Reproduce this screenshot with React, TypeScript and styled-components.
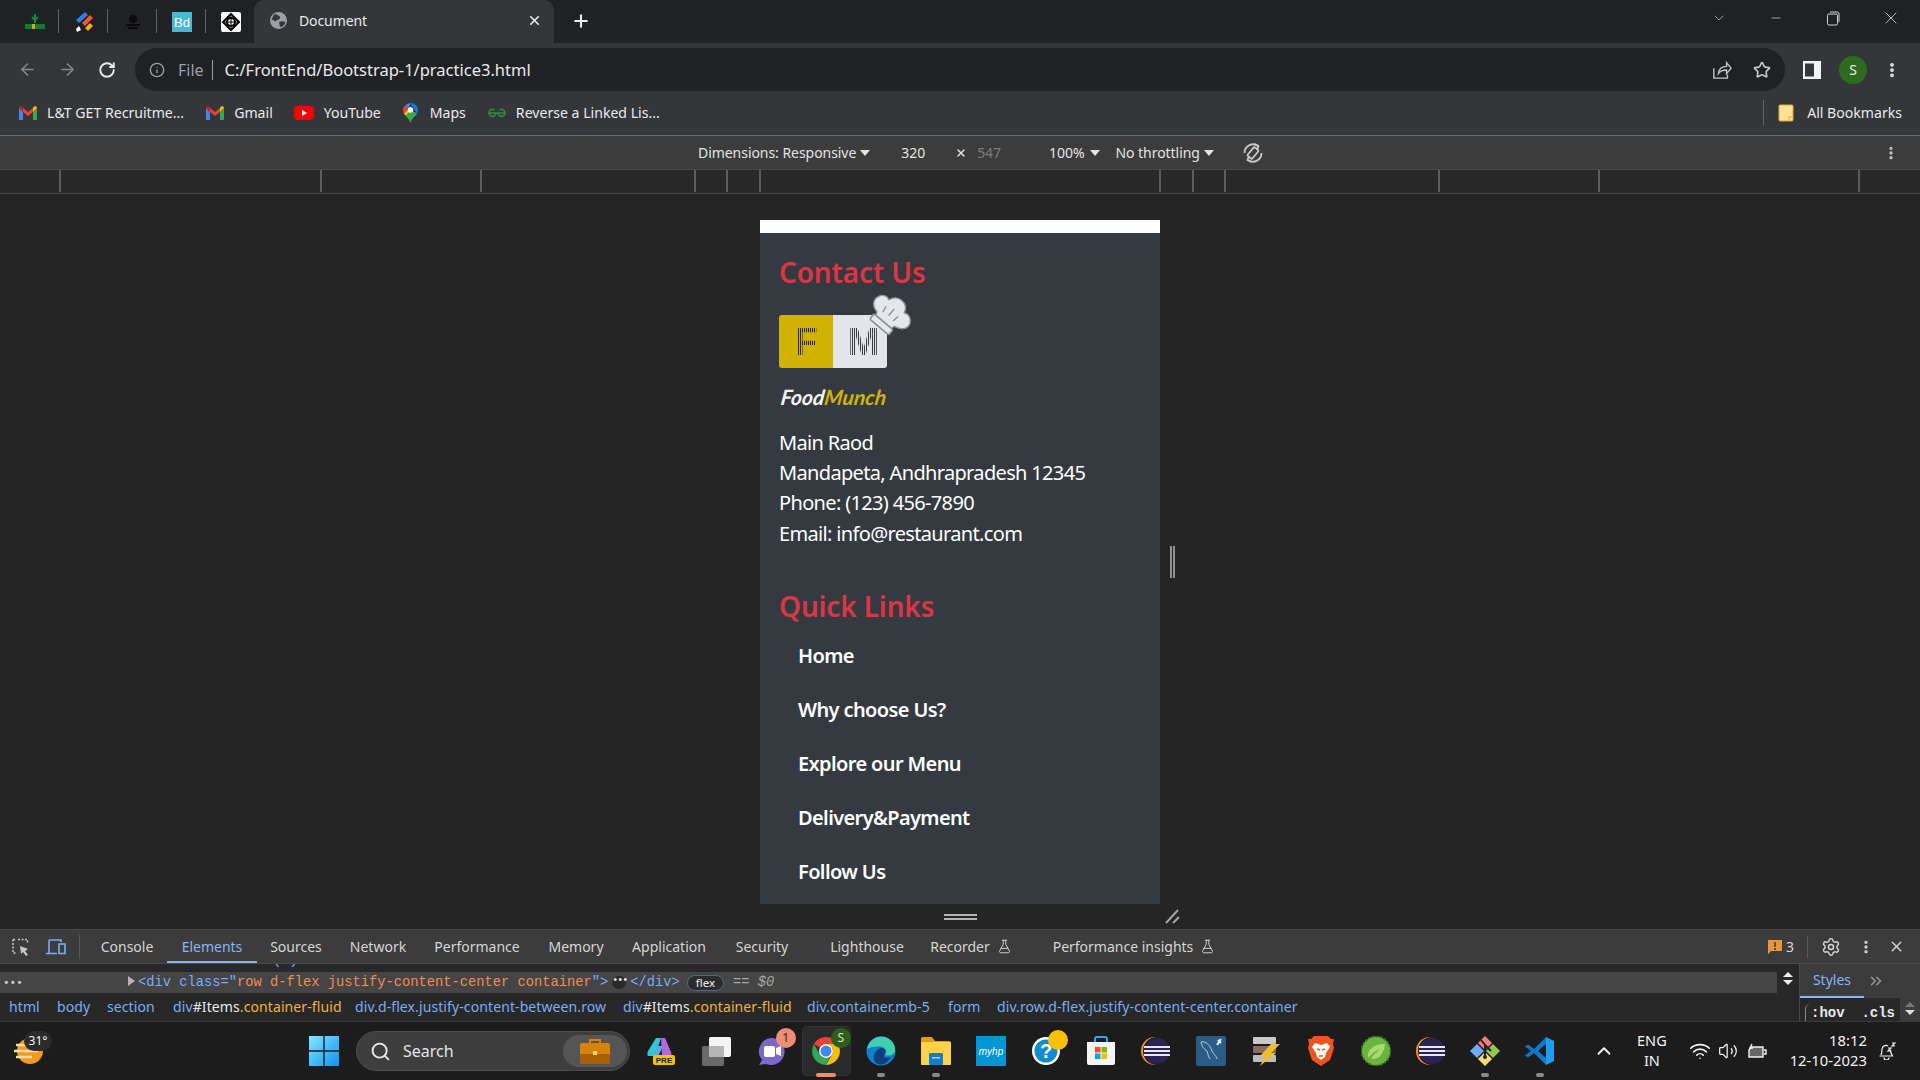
import React from 'react';
import styled, { createGlobalStyle } from 'styled-components';
import {
  ArrowLeft,
  ArrowRight,
  RotateCw,
  Info,
  Star,
  X,
  Plus,
  Minus,
  ChevronDown,
  ChevronUp,
  Settings,
  EllipsisVertical,
  Search,
  Wifi,
  Volume2,
  FlaskConical,
  ChevronsRight,
} from 'lucide-react';

const uiFont = `'Noto Sans', 'Open Sans', sans-serif`;

const GlobalStyle = createGlobalStyle`
  html, body { margin: 0; padding: 0; background: #252525; }
  * { box-sizing: border-box; }
  body { font-family: ${uiFont}; overflow: hidden; }
`;

const Page = styled.div`
  width: 1920px;
  height: 1080px;
  display: flex;
  flex-direction: column;
  overflow: hidden;
  color: #e8eaed;
`;

/* ---------- browser chrome ---------- */
const TabStrip = styled.div`
  height: 43px;
  flex: none;
  display: flex;
  padding-left: 10px;
  background: #202124;
  position: relative;
`;
const PinnedTab = styled.div<{ $sep?: boolean }>`
  width: 49px;
  height: 43px;
  display: flex;
  align-items: center;
  justify-content: center;
  position: relative;
  &::after {
    content: '';
    display: ${(p) => (p.$sep ? 'block' : 'none')};
    position: absolute;
    right: 0;
    top: 9px;
    height: 24px;
    width: 1px;
    background: #5f6368;
  }
`;
const ActiveTab = styled.div`
  width: 300px;
  height: 43px;
  margin-left: -1px;
  background: #35363a;
  border-radius: 10px 10px 0 0;
  display: flex;
  align-items: center;
  padding: 0 0 2px 16px;
  font-size: 14px;
  color: #e8eaed;
  gap: 12px;
`;
const TabTitle = styled.span`
  flex: 1;
  letter-spacing: -0.1px;
`;
const TabClose = styled.span`
  width: 27px;
  display: flex;
  color: #e8eaed;
`;
const NewTab = styled.span`
  margin-left: 17px;
  display: flex;
  align-items: center;
  padding-bottom: 1px;
  color: #e8eaed;
`;
const WindowControls = styled.div`
  margin-left: auto;
  display: flex;
  align-items: center;
  height: 36px;
  color: #d5d5d5;
`;
const WinButton = styled.span<{ $w: number }>`
  width: ${(p) => p.$w}px;
  display: flex;
  justify-content: center;
`;

const AddressRow = styled.div`
  height: 48px;
  flex: none;
  background: #35363a;
  display: flex;
  padding: 5px 0 0 0;
  align-items: flex-start;
`;
const NavButton = styled.span<{ $w: number; $dim?: boolean }>`
  width: ${(p) => p.$w}px;
  height: 43px;
  display: flex;
  align-items: center;
  justify-content: center;
  color: ${(p) => (p.$dim ? '#85878b' : '#e8eaed')};
`;
const Omnibox = styled.div`
  width: 1650px;
  height: 43px;
  border-radius: 22px;
  background: #202124;
  display: flex;
  align-items: center;
  padding-left: 14px;
  margin-left: 5px;
  font-size: 16px;
`;
const FileLabel = styled.span`
  margin-left: 13px;
  color: #9aa0a6;
  padding-right: 8px;
  border-right: 1px solid #9aa0a6;
  line-height: 20px;
`;
const Url = styled.span`
  margin-left: 12px;
  flex: 1;
  font-size: 16.5px;
  color: #e8eaed;
`;
const OmniIcon = styled.span<{ $w: number }>`
  width: ${(p) => p.$w}px;
  display: flex;
  justify-content: center;
  color: #c4c7c5;
`;
const Avatar = styled.span`
  width: 28px;
  height: 28px;
  border-radius: 50%;
  background: #2e6b1f;
  color: #e8eaed;
  font-size: 14px;
  display: flex;
  align-items: center;
  justify-content: center;
`;

const BookmarkBar = styled.div`
  height: 45px;
  flex: none;
  background: #35363a;
  border-bottom: 1px solid #6b6c6f;
  display: flex;
  align-items: center;
  padding: 0 0 1px 19px;
  font-size: 14.1px;
`;
const Bookmark = styled.span<{ $ml: number }>`
  display: flex;
  align-items: center;
  gap: 10px;
  margin-left: ${(p) => p.$ml}px;
  color: #e8eaed;
  white-space: nowrap;
`;
const BookmarkEnd = styled.span`
  margin-left: auto;
  display: flex;
  align-items: center;
  gap: 13px;
  padding: 0 18px 0 14px;
  height: 26px;
  border-left: 1px solid #5f6368;
`;

/* ---------- device toolbar ---------- */
const DeviceBar = styled.div`
  height: 34px;
  flex: none;
  background: #3c3c3c;
  border-bottom: 1px solid #4a4a4a;
  display: flex;
  align-items: center;
  padding-left: 698px;
  font-size: 14px;
  color: #e3e3e3;
`;
const DeviceText = styled.span<{ $ml?: number; $dim?: boolean }>`
  margin-left: ${(p) => p.$ml ?? 0}px;
  color: ${(p) => (p.$dim ? '#7d7d7d' : '#e3e3e3')};
  white-space: nowrap;
  letter-spacing: -0.05px;
`;
const Caret = styled.span`
  width: 0;
  height: 0;
  margin-left: 4px;
  border-left: 5px solid transparent;
  border-right: 5px solid transparent;
  border-top: 6px solid #e3e3e3;
`;
const Ruler = styled.div`
  height: 24px;
  flex: none;
  background: #292929;
  border-bottom: 1px solid #494949;
  display: flex;
`;
const RulerCell = styled.span<{ $w: number }>`
  width: ${(p) => p.$w}px;
  height: 22px;
  border-right: 2px solid #5c5c5c;
  flex: none;
`;

/* ---------- emulated page ---------- */
const Viewport = styled.div`
  height: 735px;
  flex: none;
  background: #252525;
  padding-top: 26px;
  display: flex;
  justify-content: center;
  position: relative;
`;
const Device = styled.div`
  width: 400px;
  height: 684px;
  background: #343a40;
  border-top: 13px solid #fff;
  padding: 22px 19px 0;
  overflow: hidden;
  flex: none;
`;
const SectionTitle = styled.h3`
  margin: 0;
  font-size: 28px;
  line-height: 34px;
  font-weight: 600;
  color: #dc3545;
  letter-spacing: -0.15px;
`;
const Logo = styled.div`
  width: 108px;
  height: 53px;
  margin-top: 26px;
  display: flex;
  position: relative;
`;
const LogoCell = styled.div<{ $bg: string; $radius: string }>`
  flex: 1;
  background: ${(p) => p.$bg};
  border-radius: ${(p) => p.$radius};
  display: flex;
  align-items: center;
  justify-content: center;
`;
const LogoLetter = styled.span<{ $c: string; $ml?: number }>`
  font-family: 'Liberation Sans', sans-serif;
  font-weight: 700;
  font-size: 38px;
  line-height: 1;
  margin-left: ${(p) => p.$ml ?? 0}px;
  background: repeating-linear-gradient(90deg, ${(p) => p.$c} 0 1px, transparent 1px 2px);
  -webkit-background-clip: text;
  background-clip: text;
  color: transparent;
`;
const HatWrap = styled.span`
  position: absolute;
  right: -30px;
  top: -28px;
  display: flex;
`;
const Brand = styled.div`
  margin-top: 13px;
  height: 32px;
  line-height: 32px;
  font-family: 'Lato', sans-serif;
  font-style: italic;
  font-weight: 700;
  font-size: 21px;
  color: #f3f3f3;
  transform: skewX(-8deg);
  transform-origin: left bottom;
`;
const BrandAccent = styled.span`
  color: #d0b200;
`;
const Address = styled.p`
  margin: 15px 0 0;
  font-size: 20px;
  line-height: 30.2px;
  color: #fff;
  letter-spacing: -0.66px;
`;
const LinksTitle = styled(SectionTitle)`
  margin-top: 40px;
`;
const LinkList = styled.ul`
  list-style: none;
  margin: 6px 0 0;
  padding: 0 0 0 19px;
`;
const LinkItem = styled.li`
  height: 54px;
  line-height: 54px;
  font-size: 20px;
  font-weight: 600;
  color: #fff;
  letter-spacing: -0.62px;
`;
const ResizeHandle = styled.span<{ $x: number; $y: number }>`
  position: absolute;
  left: ${(p) => p.$x}px;
  top: ${(p) => p.$y}px;
  display: flex;
`;

/* ---------- devtools ---------- */
const DevTabs = styled.div`
  height: 35px;
  flex: none;
  background: #3c3c3c;
  border-top: 1px solid #4a4a4a;
  border-bottom: 1px solid #4a4a4a;
  display: flex;
  align-items: center;
  font-size: 14px;
  color: #d6d6d6;
  position: relative;
`;
const DevIcon = styled.span<{ $w: number }>`
  width: ${(p) => p.$w}px;
  display: flex;
  justify-content: center;
`;
const DevDivider = styled.span`
  width: 1px;
  height: 24px;
  background: #5a5a5a;
`;
const DevTab = styled.span<{ $w: number; $active?: boolean }>`
  width: ${(p) => p.$w}px;
  height: 33px;
  line-height: 32px;
  flex: none;
  text-align: center;
  white-space: nowrap;
  color: ${(p) => (p.$active ? '#8ab4f8' : '#d6d6d6')};
  box-shadow: ${(p) => (p.$active ? 'inset 0 -2px 0 #8ab4f8' : 'none')};
  display: flex;
  align-items: center;
  justify-content: center;
  gap: 7px;
`;
const ConsoleTab = styled(DevTab)`
  padding-left: 7px;
`;
const DevRight = styled.div`
  margin-left: auto;
  display: flex;
  align-items: center;
  height: 33px;
`;
const IssueCount = styled.span`
  display: flex;
  align-items: center;
  gap: 4px;
  font-size: 14px;
  padding-right: 13px;
  margin-right: 12px;
  border-right: 1px solid #5a5a5a;
  height: 22px;
`;

const Split = styled.div`
  height: 57px;
  flex: none;
  display: flex;
  background: #282828;
`;
const ElementsPane = styled.div`
  flex: 1;
  display: flex;
  flex-direction: column;
  min-width: 0;
`;
const ClippedLine = styled.div`
  height: 8px;
  flex: none;
  overflow: hidden;
  background: #282828;
  padding-left: 141px;
  font-family: 'Liberation Mono', monospace;
  font-size: 13.75px;
  line-height: 8px;
  color: #7cacf8;
  white-space: pre;
`;
const ClippedText = styled.span`
  display: block;
  margin-top: -7px;
`;
const SelectedLine = styled.div`
  height: 21px;
  flex: none;
  background: #454545;
  display: flex;
  align-items: center;
  font-family: 'Liberation Mono', monospace;
  font-size: 13.75px;
  color: #7cacf8;
  white-space: pre;
  position: relative;
`;
const Dots = styled.span`
  width: 128px;
  padding-left: 3px;
  color: #c8c8c8;
  font-weight: 700;
  font-size: 11px;
  letter-spacing: 0;
`;
const MarkerArrow = styled.span`
  width: 0;
  height: 0;
  border-top: 5px solid transparent;
  border-bottom: 5px solid transparent;
  border-left: 7px solid #b5b5b5;
  margin-right: 3px;
  margin-top: -4px;
`;
const AttrValue = styled.span`
  color: #f28b54;
`;
const Ellipsis = styled.span`
  width: 14px;
  height: 13px;
  margin: 0 4px;
  border-radius: 7px;
  background: #2a2a2a;
  color: #eee;
  font-size: 10px;
  line-height: 10px;
  text-align: center;
  letter-spacing: -1px;
`;
const FlexChip = styled.span`
  margin: 0 9px 0 7px;
  width: 37px;
  height: 16px;
  border-radius: 8px;
  border: 1px solid #4e6c83;
  background: #2c2c2c;
  color: #eee;
  font-family: ${uiFont};
  font-size: 11.5px;
  line-height: 14px;
  text-align: center;
`;
const Muted = styled.span`
  color: #a5a5a5;
  font-style: italic;
`;
const Breadcrumbs = styled.div`
  height: 28px;
  flex: none;
  display: flex;
  align-items: center;
  padding: 0 0 2px 9px;
  font-size: 14px;
  color: #7cacf8;
  letter-spacing: 0.1px;
  white-space: nowrap;
`;
const Crumb = styled.span<{ $w: number }>`
  width: ${(p) => p.$w}px;
  flex: none;
`;
const CrumbId = styled.span`
  color: #e8eaed;
`;
const CrumbClass = styled.span`
  color: #f0b33a;
`;
const Stepper = styled.div`
  width: 22px;
  display: flex;
  flex-direction: column;
  align-items: center;
  padding-top: 8px;
  gap: 3px;
  height: 29px;
`;
const StepArrow = styled.span<{ $down?: boolean; $dim?: boolean }>`
  width: 0;
  height: 0;
  border-left: 5px solid transparent;
  border-right: 5px solid transparent;
  ${(p) =>
    p.$down
      ? `border-top: 5px solid ${p.$dim ? '#ddd' : '#eee'};`
      : `border-bottom: 5px solid ${p.$dim ? '#777' : '#eee'};`}
`;
const SidePane = styled.div`
  width: 121px;
  flex: none;
  background: #3c3c3c;
  border-left: 1px solid #4a4a4a;
  display: flex;
  flex-direction: column;
`;
const SideTabs = styled.div`
  height: 34px;
  flex: none;
  display: flex;
  align-items: center;
  font-size: 14px;
  color: #8ab4f8;
`;
const StylesTab = styled.span`
  width: 64px;
  height: 34px;
  line-height: 32px;
  text-align: center;
  box-shadow: inset 0 -2px 0 #8ab4f8;
`;
const HovRow = styled.div`
  flex: 1;
  background: #282828;
  display: flex;
  font-family: 'Liberation Mono', monospace;
  font-weight: 700;
  font-size: 14px;
  color: #e8eaed;
  padding: 0 0 0 5px;
  overflow: hidden;
  line-height: 30px;
  white-space: pre;
  position: relative;
`;
const HovPane = styled.div`
  flex: 1;
  padding-left: 5px;
  border-left: 1px solid #8a8a8a;
  margin-top: 6px;
  line-height: 18px;
  border-top-left-radius: 5px;
`;
const HovStepper = styled.div`
  width: 20px;
  background: #3c3c3c;
  display: flex;
  flex-direction: column;
  align-items: center;
  padding-top: 4px;
  gap: 3px;
`;

/* ---------- taskbar ---------- */
const Taskbar = styled.div`
  height: 61px;
  flex: none;
  background: #1c1c1c;
  border-top: 1px solid #3a3a3a;
  display: flex;
  align-items: center;
  padding-bottom: 2px;
  position: relative;
`;
const Weather = styled.div`
  width: 55px;
  height: 58px;
  flex: none;
  margin-right: 242px;
  position: relative;
  display: flex;
  align-items: center;
  justify-content: center;
`;
const Temp = styled.span`
  position: absolute;
  left: 24px;
  top: 9px;
  width: 28px;
  height: 20px;
  border-radius: 10px;
  background: #2b2b2b;
  font-size: 12px;
  line-height: 20px;
  text-align: center;
  color: #f2f2f2;
`;
const TaskSlot = styled.div<{ $active?: boolean; $run?: boolean }>`
  width: 54.95px;
  height: 58px;
  flex: none;
  display: flex;
  align-items: center;
  justify-content: center;
  position: relative;
  &::before {
    content: '';
    display: ${(p) => (p.$active ? 'block' : 'none')};
    position: absolute;
    left: 3px;
    right: 3px;
    top: 4px;
    bottom: 4px;
    border-radius: 5px;
    background: #2a2a2a;
    border: 1px solid #333;
  }
  &::after {
    content: '';
    display: ${(p) => (p.$run || p.$active ? 'block' : 'none')};
    position: absolute;
    bottom: 3px;
    left: 50%;
    transform: translateX(-50%);
    width: ${(p) => (p.$active ? 20 : 8)}px;
    height: 4px;
    border-radius: 2px;
    background: ${(p) => (p.$active ? '#f28b74' : '#8a8a8a')};
  }
  & > * {
    position: relative;
  }
`;
const SearchPill = styled.div`
  width: 274px;
  height: 40px;
  flex: none;
  margin: 0 4px;
  border-radius: 20px;
  background: #3e3e3e;
  border: 1px solid #4b4b4b;
  display: flex;
  align-items: center;
  padding-left: 13px;
  gap: 12px;
  font-size: 16px;
  color: #e6e6e6;
`;
const SearchBadge = styled.span`
  margin-left: auto;
  margin-right: 2px;
  width: 64px;
  height: 32px;
  border-radius: 16px;
  background: #555;
  display: flex;
  align-items: center;
  justify-content: center;
`;
const Badge = styled.span<{ $bg: string }>`
  position: absolute !important;
  top: 6px;
  right: 3px;
  width: 20px;
  height: 20px;
  border-radius: 50%;
  background: ${(p) => p.$bg};
  color: #2a2a2a;
  font-size: 12px;
  line-height: 20px;
  text-align: center;
`;
const Tray = styled.div`
  margin-left: 21px;
  display: flex;
  align-items: center;
  color: #f2f2f2;
`;
const TrayIcon = styled.span<{ $w: number; $ml?: number }>`
  width: ${(p) => p.$w}px;
  margin-left: ${(p) => p.$ml ?? 0}px;
  display: flex;
  justify-content: center;
`;
const Lang = styled.span`
  width: 46px;
  margin: 0 0 3px 10px;
  font-size: 14.5px;
  line-height: 20px;
  text-align: center;
`;
const Clock = styled.span`
  width: 90px;
  margin: 0 0 3px 8px;
  font-size: 14.8px;
  line-height: 20px;
  text-align: right;
`;

/* ---------- small drawings ---------- */
const GmailIcon = () => (
  <svg width="18" height="14" viewBox="0 0 18 14">
    <path d="M0 2v12h4V6z" fill="#4285f4" />
    <path d="M18 2v12h-4V6z" fill="#34a853" />
    <path d="M4 6v-4l5 4 5-4v4l-5 4z" fill="#ea4335" />
    <path d="M0 2l4 4V1.5L2 0C1 0 0 1 0 2z" fill="#c5221f" />
    <path d="M18 2l-4 4V1.5L16 0c1 0 2 1 2 2z" fill="#fbbc04" />
  </svg>
);
const YouTubeIcon = () => (
  <svg width="20" height="14" viewBox="0 0 20 14">
    <rect width="20" height="14" rx="4" fill="#f00" />
    <path d="M8 4l5 3-5 3z" fill="#fff" />
  </svg>
);
const MapsIcon = () => (
  <svg width="15" height="20" viewBox="0 0 15 20">
    <path d="M7.5 0a7 7 0 0 0-5.5 2.6l3.5 3z" fill="#4285f4" />
    <path d="M7.5 0C11.600 0 15 3 15 7c0 1.200-.3 2.300-.8 3.300L10 5z" fill="#1a73e8" />
    <path d="M2 2.600A7 7 0 0 0 0 7c0 1.200.3 2.300.9 3.400L5.500 5.600z" fill="#ea4335" />
    <path d="M.9 10.400C2.500 13.500 6 15 7.500 20c1.500-5 4.800-6.500 6.700-9.700L7.500 7z" fill="#34a853" />
    <path d="M.9 10.400L7.500 4 9.500 5.500 3 12.500z" fill="#fbbc04" />
    <circle cx="7.500" cy="7" r="2.700" fill="#fff" />
  </svg>
);
const GfgIcon = () => (
  <svg width="18" height="10" viewBox="0 0 18 10" fill="none" stroke="#2f8d46" strokeWidth="1.500">
    <path d="M1 5h16M8 5a3.500 3.500 0 1 1-1.500-3M10 5a3.500 3.500 0 1 0 1.500-3" />
  </svg>
);
const Chrome = ({ size = 30 }: { size?: number }) => (
  <svg width={size} height={size} viewBox="0 0 30 30">
    <path d="M15 1a14 14 0 0 1 12.100 7H15a7 7 0 0 0-6.100 3.500L2.900 8A14 14 0 0 1 15 1z" fill="#ea4335" />
    <path d="M27.100 8A14 14 0 0 1 15 29l6.100-10.500A7 7 0 0 0 21 11.500 7 7 0 0 0 15 8z" fill="#fbbc04" />
    <path d="M2.900 8A14 14 0 0 0 15 29l6.100-10.500a7 7 0 0 1-12.200 0z" fill="#34a853" />
    <circle cx="15" cy="15" r="7" fill="#fff" />
    <circle cx="15" cy="15" r="5.500" fill="#4285f4" />
  </svg>
);
const Eclipse = () => (
  <svg width="30" height="30" viewBox="0 0 30 30">
    <circle cx="14" cy="15" r="14" fill="#f7941e" />
    <circle cx="16" cy="15" r="14" fill="#1c1c1c" />
    <circle cx="16" cy="15" r="13" fill="#2c2255" />
    <path d="M3 11h26M3 15h26M3 19h26" stroke="#e9e7f2" strokeWidth="2" />
  </svg>
);
const Hat = () => (
  <svg width="54" height="54" viewBox="0 0 48 48">
    <g transform="rotate(40 24 24)">
      <path
        d="M14 30c-6-1-10-5-8-11 1-4 6-6 9-4 2-5 5-7 9-7s8 2 9 7c4-2 8 0 10 4 2 6-3 10-9 11l-1 3H15z"
        fill="#e4e7ec"
        stroke="#8b929b"
        strokeWidth="1.200"
      />
      <rect x="13" y="33" width="22" height="6" rx="1.500" fill="#e4e7ec" stroke="#8b929b" strokeWidth="1.500" />
      <path d="M17 21l1 6M24 18v8M31 21l-1 6" stroke="#8b929b" strokeWidth="1.200" fill="none" />
    </g>
  </svg>
);
const Flask = () => <FlaskConical size={15} strokeWidth={1.5} color="#d6d6d6" />;

const rulerStops = [61, 322, 482, 696, 728, 761, 1161, 1194, 1226, 1440, 1600, 1860];

const taskApps: { key: string; run?: boolean; active?: boolean; node: React.ReactNode }[] = [
  {
    key: 'copilot',
    node: (
      <svg width="30" height="30" viewBox="0 0 30 30">
        <path d="M10 2h5l-6 18H3C1 20 1 18 2 15z" fill="#36c5d6" />
        <path d="M15 2l4 0 6 14c1 3 0 5-3 5h-6z" fill="#b964e0" />
        <path d="M8 20l4-10h5l-5 11z" fill="#5ea7f2" />
        <rect x="7" y="19" width="22" height="10" rx="2" fill="#f5c400" />
        <text x="18" y="27" fontSize="8" fontWeight="700" textAnchor="middle" fill="#222" fontFamily="Liberation Sans">
          PRE
        </text>
      </svg>
    ),
  },
  {
    key: 'taskview',
    node: (
      <svg width="30" height="30" viewBox="0 0 30 30">
        <rect x="1" y="10" width="22" height="20" rx="2" fill="#6a6a6a" />
        <rect x="8" y="1" width="22" height="20" rx="2" fill="#f4f4f4" />
        <rect x="8" y="10" width="15" height="11" fill="#b5b5b5" />
      </svg>
    ),
  },
  {
    key: 'chat',
    node: (
      <>
        <svg width="30" height="30" viewBox="0 0 30 30">
          <path d="M15 2a13.500 13.500 0 1 1-5 26l-7 1 3-5A13.500 13.500 0 0 1 15 2z" fill="#7b68c8" />
          <rect x="8" y="10" width="11" height="11" rx="2" fill="#fff" />
          <path d="M20 12l5-2v10l-5-2z" fill="#fff" />
        </svg>
        <Badge $bg="#f28b74">1</Badge>
      </>
    ),
  },
  {
    key: 'chrome',
    active: true,
    node: (
      <>
        <Chrome />
        <Badge $bg="#2f5e1c" style={{ color: '#cfe5c2' }}>
          S
        </Badge>
      </>
    ),
  },
  {
    key: 'edge',
    run: true,
    node: (
      <svg width="30" height="30" viewBox="0 0 30 30">
        <circle cx="15" cy="15" r="14.500" fill="#0f7fc9" />
        <path d="M1 13C3 4 10 .5 15 .5c8 0 14 6 14 13 0 4-3 6-7 6-3 0-5-2-3-4 1-2-1-5-5-5-6 0-12 1-13 3z" fill="#3fd0b0" />
        <path d="M15 12c5 0 6 4 4 6-3 3 2 5 6 3-3 6-9 9-13 7-6-2-6-13 3-16z" fill="#0c3f7c" />
      </svg>
    ),
  },
  {
    key: 'files',
    run: true,
    node: (
      <svg width="30" height="28" viewBox="0 0 30 28">
        <path d="M0 2a2 2 0 0 1 2-2h9l3 4h14a2 2 0 0 1 2 2v3H0z" fill="#e0a100" />
        <rect y="5" width="30" height="23" rx="1" fill="#fcd34d" />
        <rect x="8" y="16" width="14" height="12" rx="1.500" fill="#0f7cd0" />
        <rect x="11" y="20" width="8" height="1.500" fill="#aad6f5" />
      </svg>
    ),
  },
  {
    key: 'myhp',
    node: (
      <svg width="30" height="30" viewBox="0 0 30 30">
        <rect width="30" height="30" fill="#0096d6" />
        <text x="15" y="19" fontSize="10" fontStyle="italic" textAnchor="middle" fill="#fff" fontFamily="Liberation Sans">
          myhp
        </text>
      </svg>
    ),
  },
  {
    key: 'help',
    node: (
      <>
        <svg width="30" height="30" viewBox="0 0 30 30">
          <circle cx="15" cy="15" r="14" fill="#fff" />
          <circle cx="15" cy="15" r="11.500" fill="#0f8bd0" />
          <text x="15" y="22" fontSize="20" fontWeight="700" textAnchor="middle" fill="#fff" fontFamily="Liberation Sans">
            ?
          </text>
        </svg>
        <Badge $bg="#fdc000" style={{ top: 8, right: 5 }} />
      </>
    ),
  },
  {
    key: 'store',
    node: (
      <svg width="30" height="30" viewBox="0 0 30 30">
        <path d="M9 6V3a2 2 0 0 1 2-2h8a2 2 0 0 1 2 2v3" fill="none" stroke="#2aa8e8" strokeWidth="2" />
        <path d="M1 6h28v21a2 2 0 0 1-2 2H3a2 2 0 0 1-2-2z" fill="#f5f5f5" />
        <rect x="9" y="11" width="5.500" height="5.500" fill="#f25022" />
        <rect x="15.500" y="11" width="5.500" height="5.500" fill="#7fba00" />
        <rect x="9" y="17.500" width="5.500" height="5.500" fill="#00a4ef" />
        <rect x="15.500" y="17.500" width="5.500" height="5.500" fill="#ffb900" />
      </svg>
    ),
  },
  { key: 'eclipse', node: <Eclipse /> },
  {
    key: 'mysql',
    node: (
      <svg width="30" height="30" viewBox="0 0 30 30">
        <rect width="30" height="30" rx="2" fill="#2a5d86" />
        <path d="M5 6c5-1 9 3 11 9 1 3 4 4 5 8M5 6c1 5 3 7 6 9 1 3 1 5 3 8" fill="none" stroke="#b6cad8" strokeWidth="1" />
        <path d="M22 4l3 3M25 3l-4 6" stroke="#e4ecf2" strokeWidth="2" />
      </svg>
    ),
  },
  {
    key: 'db',
    node: (
      <svg width="30" height="30" viewBox="0 0 30 30">
        <rect x="2" y="1" width="23" height="7" rx="1" fill="#c9c9c9" />
        <rect x="2" y="10" width="23" height="7" rx="1" fill="#8d6a60" />
        <rect x="2" y="19" width="23" height="7" rx="1" fill="#bdbdbd" />
        <path d="M20 8h9L20 17h5L9 30l5-10h-5z" fill="#f0bd2b" />
      </svg>
    ),
  },
  {
    key: 'brave',
    node: (
      <svg width="26" height="30" viewBox="0 0 26 30">
        <path d="M6 0h14l3 3 3 0-1 5 1 4-4 12-9 6-9-6L0 12l1-4-1-5 3 0z" fill="#f1521f" />
        <path d="M7 7l6 2 6-2 3 4-4 6-1 4-4 3-4-3-1-4-4-6z" fill="#fff" />
        <path d="M9 13l3 1M17 13l-3 1M11 20h4" stroke="#f1521f" strokeWidth="1.500" />
      </svg>
    ),
  },
  {
    key: 'spring',
    node: (
      <svg width="30" height="30" viewBox="0 0 30 30">
        <circle cx="15" cy="15" r="14.500" fill="#6db33f" />
        <circle cx="15" cy="15" r="14.500" fill="none" stroke="#2f7d1f" strokeWidth="2" strokeDasharray="2 2" />
        <path d="M7 22c-1-8 5-14 17-14-1 10-6 16-14 15 3-5 6-8 10-10-5 1-9 4-13 9z" fill="#a5dc6f" />
      </svg>
    ),
  },
  { key: 'eclipse2', node: <Eclipse /> },
  {
    key: 'git',
    run: true,
    node: (
      <svg width="32" height="32" viewBox="0 0 32 32">
        <path d="M16 1l7 7-7 7-7-7z" fill="#f67b7b" />
        <path d="M24 9l7 7-7 7-7-7z" fill="#8fcb4f" />
        <path d="M8 9l7 7-7 7-7-7z" fill="#6fa8f7" />
        <path d="M16 17l7 7-7 7-7-7z" fill="#f7dd70" />
        <path d="M12 5l4 5v11M16 10l6 6" stroke="#222" strokeWidth="2" fill="none" />
        <circle cx="16" cy="22" r="2" fill="#222" />
      </svg>
    ),
  },
  {
    key: 'vscode',
    run: true,
    node: (
      <svg width="30" height="30" viewBox="0 0 30 30">
        <path d="M21 1l8 4v20l-8 4z" fill="#1f9cf0" />
        <path d="M21 1L9 13 3 8.500 0 10.500 6 15l-6 4.500 3 2 6-4.500 12 12v-7l-8-7 8-7z" fill="#0b7ac9" />
      </svg>
    ),
  },
];

const App: React.FC = () => {
  return (
    <Page>
      <GlobalStyle />
      <TabStrip>
        <PinnedTab $sep>
          <svg width="22" height="18" viewBox="0 0 22 18">
            <path d="M11 1v9M8 4l3 3 3-3" stroke="#0f8a3c" strokeWidth="2" fill="none" />
            <rect x="1" y="11" width="20" height="5" fill="#117a35" />
            <rect x="8" y="11" width="3" height="5" fill="#d9a520" />
          </svg>
        </PinnedTab>
        <PinnedTab $sep>
          <svg width="20" height="22" viewBox="0 0 20 22">
            <path d="M2 9L11 1l3 3-9 8z" fill="#2f7fe8" />
            <path d="M8 12l8-8 3 3-8 8z" fill="#f25a24" />
            <path d="M11 17l5-5 3 3-5 5z" fill="#fbab18" />
            <path d="M2 18l3-3 2 4-4 2z" fill="#fff" />
          </svg>
        </PinnedTab>
        <PinnedTab $sep>
          <svg width="16" height="16" viewBox="0 0 16 16">
            <circle cx="8" cy="5" r="4" fill="#0b0b0b" />
            <path d="M1 11h14M3 14h10" stroke="#0b0b0b" strokeWidth="2" />
          </svg>
        </PinnedTab>
        <PinnedTab $sep>
          <svg width="20" height="20" viewBox="0 0 20 20">
            <rect width="20" height="20" fill="#49b6d6" />
            <text x="10" y="15" fontSize="13" textAnchor="middle" fill="#fff" fontFamily="Liberation Sans">
              Bd
            </text>
          </svg>
        </PinnedTab>
        <PinnedTab>
          <svg width="20" height="20" viewBox="0 0 20 20">
            <rect width="20" height="20" rx="2" fill="#fff" />
            <path d="M10 2l8 8-8 8-8-8z" fill="none" stroke="#000" strokeWidth="2" />
            <circle cx="10" cy="10" r="4" fill="none" stroke="#000" strokeWidth="2" />
            <path d="M10 2v16M2 10h16" stroke="#000" strokeWidth="1" />
          </svg>
        </PinnedTab>
        <ActiveTab>
          <svg width="17" height="17" viewBox="0 0 17 17">
            <circle cx="8.500" cy="8.500" r="8.500" fill="#9aa0a6" />
            <path d="M5 2c2 1 4 1 5 3S7 8 6 9 3 7 2 8 3 3 5 2zM9 10c2-1 5-1 6 0s-2 5-4 5-1-3-2-5z" fill="#35363a" />
          </svg>
          <TabTitle>Document</TabTitle>
          <TabClose>
            <X size={15} strokeWidth={2.5} />
          </TabClose>
        </ActiveTab>
        <NewTab>
          <Plus size={20} strokeWidth={2.5} />
        </NewTab>
        <WindowControls>
          <WinButton $w={57}>
            <ChevronDown size={16} strokeWidth={1} />
          </WinButton>
          <WinButton $w={57}>
            <Minus size={14} strokeWidth={1.2} />
          </WinButton>
          <WinButton $w={58}>
            <svg width="14" height="15" viewBox="0 0 14 15" fill="none" stroke="#d5d5d5" strokeWidth="1">
              <rect x="1.500" y="3" width="10" height="11" rx="1.500" />
              <path d="M4 1h7a2 2 0 0 1 2 2v8" />
            </svg>
          </WinButton>
          <WinButton $w={58}>
            <X size={20} strokeWidth={1} />
          </WinButton>
        </WindowControls>
      </TabStrip>

      <AddressRow>
        <NavButton $w={47} style={{ marginLeft: 4 }} $dim>
          <ArrowLeft size={19} />
        </NavButton>
        <NavButton $w={32} $dim>
          <ArrowRight size={19} />
        </NavButton>
        <NavButton $w={47}>
          <RotateCw size={18} strokeWidth={2.5} />
        </NavButton>
        <Omnibox>
          <Info size={16} color="#9aa0a6" />
          <FileLabel>File</FileLabel>
          <Url>C:/FrontEnd/Bootstrap-1/practice3.html</Url>
          <OmniIcon $w={40}>
            <svg width="20" height="20" viewBox="0 0 22 22" fill="none" stroke="#c4c7c5" strokeWidth="1.500">
              <path d="M2 9v11h15v-4" />
              <path d="M7 15c0-5 4-8 9-8V3l5 6-5 6v-4c-4 0-7 1-9 4z" />
            </svg>
          </OmniIcon>
          <OmniIcon $w={40} style={{ marginRight: 3 }}>
            <Star size={18} strokeWidth={2.2} />
          </OmniIcon>
        </Omnibox>
        <NavButton $w={54}>
          <svg width="18" height="18" viewBox="0 0 18 18">
            <path d="M0 0h18v18H0z" fill="#f1f3f4" />
            <rect x="2" y="2.500" width="9" height="13" fill="#35363a" />
          </svg>
        </NavButton>
        <NavButton $w={28}>
          <Avatar>S</Avatar>
        </NavButton>
        <NavButton $w={50}>
          <EllipsisVertical size={18} strokeWidth={3} />
        </NavButton>
      </AddressRow>

      <BookmarkBar>
        <Bookmark $ml={0}>
          <GmailIcon />
          L&amp;T GET Recruitme...
        </Bookmark>
        <Bookmark $ml={22}>
          <GmailIcon />
          Gmail
        </Bookmark>
        <Bookmark $ml={21}>
          <YouTubeIcon />
          YouTube
        </Bookmark>
        <Bookmark $ml={22} style={{ gap: 12 }}>
          <MapsIcon />
          Maps
        </Bookmark>
        <Bookmark $ml={22}>
          <GfgIcon />
          Reverse a Linked Lis...
        </Bookmark>
        <BookmarkEnd>
          <svg width="16" height="18" viewBox="0 0 16 18">
            <rect x="1" y="1" width="14" height="16" rx="1" fill="#fde293" stroke="#d6aa3a" />
            <path d="M11 17v-4h4" fill="none" stroke="#d6aa3a" />
          </svg>
          All Bookmarks
        </BookmarkEnd>
      </BookmarkBar>

      <DeviceBar>
        <DeviceText>Dimensions: Responsive</DeviceText>
        <Caret />
        <DeviceText $ml={31}>320</DeviceText>
        <X size={12} strokeWidth={3} color="#e3e3e3" style={{ marginLeft: 30 }} />
        <DeviceText $ml={10} $dim>
          547
        </DeviceText>
        <DeviceText $ml={48}>100%</DeviceText>
        <Caret style={{ marginLeft: 5 }} />
        <DeviceText $ml={16}>No throttling</DeviceText>
        <Caret />
        <DevIcon $w={24} style={{ marginLeft: 27 }}>
          <svg width="24" height="24" viewBox="0 0 24 24" fill="none" stroke="#c8c8c8" strokeWidth="1.800">
            <rect x="9" y="6.500" width="6" height="11" rx="1" transform="rotate(40 12 12)" />
            <path d="M3.500 12A8.500 8.500 0 0 1 17 5M20.500 12A8.500 8.500 0 0 1 7 19" />
            <path d="M13.500 3l4 2-1.500 4M10.500 21l-4-2 1.500-4" />
          </svg>
        </DevIcon>
        <DevIcon $w={20} style={{ marginLeft: 'auto', marginRight: 19 }}>
          <EllipsisVertical size={16} strokeWidth={3} color="#c8c8c8" />
        </DevIcon>
      </DeviceBar>
      <Ruler>
        {rulerStops.map((stop, i) => (
          <RulerCell key={stop} $w={stop - (i === 0 ? 0 : rulerStops[i - 1])} />
        ))}
      </Ruler>

      <Viewport>
        <Device>
          <SectionTitle>Contact Us</SectionTitle>
          <Logo>
            <LogoCell $bg="#d0b200" $radius="3px 0 0 3px">
              <LogoLetter $c="#26282c">F</LogoLetter>
            </LogoCell>
            <LogoCell $bg="#e2e6ea" $radius="0 3px 3px 0">
              <LogoLetter $c="#343a40" $ml={7}>
                M
              </LogoLetter>
            </LogoCell>
            <HatWrap>
              <Hat />
            </HatWrap>
          </Logo>
          <Brand>
            Food<BrandAccent>Munch</BrandAccent>
          </Brand>
          <Address>
            Main Raod
            <br />
            Mandapeta, Andhrapradesh 12345
            <br />
            Phone: (123) 456-7890
            <br />
            Email: info@restaurant.com
          </Address>
          <LinksTitle>Quick Links</LinksTitle>
          <LinkList>
            <LinkItem>Home</LinkItem>
            <LinkItem>Why choose Us?</LinkItem>
            <LinkItem>Explore our Menu</LinkItem>
            <LinkItem>Delivery&amp;Payment</LinkItem>
            <LinkItem>Follow Us</LinkItem>
          </LinkList>
        </Device>
        <ResizeHandle $x={1170} $y={352}>
          <svg width="5" height="32" viewBox="0 0 5 32">
            <path d="M1 0v32M4 0v32" stroke="#b5b5b5" strokeWidth="1.500" />
          </svg>
        </ResizeHandle>
        <ResizeHandle $x={944} $y={720}>
          <svg width="33" height="6" viewBox="0 0 33 6">
            <path d="M0 1h33M0 5h33" stroke="#b5b5b5" strokeWidth="2" />
          </svg>
        </ResizeHandle>
        <ResizeHandle $x={1165} $y={715}>
          <svg width="15" height="15" viewBox="0 0 15 15">
            <path d="M1 14L13 1M8 14l6-6" stroke="#a5a5a5" strokeWidth="2" />
          </svg>
        </ResizeHandle>
      </Viewport>

      <DevTabs>
        <DevIcon $w={42}>
          <svg width="18" height="18" viewBox="0 0 18 18" fill="none" stroke="#c8c8c8" strokeWidth="1.500">
            <path d="M6 1.500h9.500V6M1 1.500h2M1 1.500V15h4" strokeDasharray="2 1.500" />
            <path d="M8 8l8 3-3 2 3 4-2 1-3-4-2 2z" fill="#c8c8c8" stroke="none" />
          </svg>
        </DevIcon>
        <DevIcon $w={28}>
          <svg width="20" height="16" viewBox="0 0 20 16" fill="none" stroke="#7cacf8" strokeWidth="1.600">
            <path d="M3 14V2a1 1 0 0 1 1-1h11v2M0 14.500h11" />
            <rect x="13" y="5" width="6" height="9.500" />
          </svg>
        </DevIcon>
        <DevDivider style={{ marginLeft: 9 }} />
        <ConsoleTab $w={87}>Console</ConsoleTab>
        <DevTab $w={90} $active>
          Elements
        </DevTab>
        <DevTab $w={78}>Sources</DevTab>
        <DevTab $w={86}>Network</DevTab>
        <DevTab $w={112}>Performance</DevTab>
        <DevTab $w={86}>Memory</DevTab>
        <DevTab $w={100}>Application</DevTab>
        <DevTab $w={86}>Security</DevTab>
        <DevTab $w={124}>Lighthouse</DevTab>
        <DevTab $w={84}>
          Recorder
          <Flask />
        </DevTab>
        <DevTab $w={242}>
          Performance insights
          <Flask />
        </DevTab>
        <DevRight>
          <IssueCount>
            <svg width="14" height="14" viewBox="0 0 14 14">
              <path d="M0 0h14v11H3l-3 3z" fill="#e6963c" />
              <path d="M7 2v5M7 8v2" stroke="#3c3c3c" strokeWidth="1.600" />
            </svg>
            3
          </IssueCount>
          <DevIcon $w={22}>
            <Settings size={20} strokeWidth={1.7} color="#d6d6d6" />
          </DevIcon>
          <DevIcon $w={39} style={{ marginLeft: 4 }}>
            <EllipsisVertical size={16} strokeWidth={3} color="#d6d6d6" />
          </DevIcon>
          <DevIcon $w={22} style={{ marginRight: 13 }}>
            <X size={17} strokeWidth={2} color="#d6d6d6" />
          </DevIcon>
        </DevRight>
      </DevTabs>

      <Split>
        <ElementsPane>
          <ClippedLine>
            <ClippedText>{'div class="row" ( ) </div>'}</ClippedText>
          </ClippedLine>
          <SelectedLine>
            <Dots>•••</Dots>
            <MarkerArrow />
            {'<div class="'}
            <AttrValue>row d-flex justify-content-center container</AttrValue>
            {'">'}
            <Ellipsis>•••</Ellipsis>
            {'</div>'}
            <FlexChip>flex</FlexChip>
            <Muted>{'== $0'}</Muted>
          </SelectedLine>
          <Breadcrumbs>
            <Crumb $w={48}>html</Crumb>
            <Crumb $w={50}>body</Crumb>
            <Crumb $w={66}>section</Crumb>
            <Crumb $w={182}>
              div<CrumbId>#Items</CrumbId>
              <CrumbClass>.container-fluid</CrumbClass>
            </Crumb>
            <Crumb $w={268}>div.d-flex.justify-content-between.row</Crumb>
            <Crumb $w={184}>
              div<CrumbId>#Items</CrumbId>
              <CrumbClass>.container-fluid</CrumbClass>
            </Crumb>
            <Crumb $w={141}>div.container.mb-5</Crumb>
            <Crumb $w={49}>form</Crumb>
            <Crumb $w={340}>div.row.d-flex.justify-content-center.container</Crumb>
          </Breadcrumbs>
        </ElementsPane>
        <Stepper>
          <StepArrow />
          <StepArrow $down />
        </Stepper>
        <SidePane>
          <SideTabs>
            <StylesTab>Styles</StylesTab>
            <ChevronsRight size={18} color="#9a9a9a" style={{ marginLeft: 3 }} />
          </SideTabs>
          <HovRow>
            <HovPane>{':hov  .cls'}</HovPane>
            <HovStepper>
              <StepArrow $dim />
              <StepArrow $down $dim />
            </HovStepper>
          </HovRow>
        </SidePane>
      </Split>

      <Taskbar>
        <Weather>
          <svg width="30" height="30" viewBox="0 0 30 30">
            <circle cx="17" cy="15" r="13" fill="#f39a1b" />
            <path d="M3 9h14M1 15h24M3 21h16" stroke="#f4deb0" strokeWidth="2.500" />
          </svg>
          <Temp>31°</Temp>
        </Weather>
        <TaskSlot>
          <svg width="30" height="30" viewBox="0 0 30 30">
            <defs>
              <linearGradient id="win" x1="0" y1="0" x2="1" y2="1">
                <stop offset="0" stopColor="#86e6ff" />
                <stop offset="1" stopColor="#0a94f5" />
              </linearGradient>
            </defs>
            <path d="M0 0h14.300v14.300H0zM15.700 0H30v14.300H15.700zM0 15.700h14.300V30H0zM15.700 15.700H30V30H15.700z" fill="url(#win)" />
          </svg>
        </TaskSlot>
        <SearchPill>
          <Search size={21} strokeWidth={2.2} color="#e8e8e8" />
          Search
          <SearchBadge>
            <svg width="30" height="26" viewBox="0 0 30 26">
              <rect y="5" width="30" height="21" rx="2" fill="#d78208" />
              <rect y="16" width="30" height="10" fill="#a85f06" />
              <path d="M10 5V2h10v3" fill="none" stroke="#d78208" strokeWidth="2" />
              <rect x="13" y="13" width="4" height="4" fill="#f7d774" />
            </svg>
          </SearchBadge>
        </SearchPill>
        {taskApps.map((app) => (
          <TaskSlot key={app.key} $active={app.active} $run={app.run}>
            {app.node}
          </TaskSlot>
        ))}
        <Tray>
          <TrayIcon $w={30}>
            <ChevronUp size={22} strokeWidth={2} />
          </TrayIcon>
          <Lang>
            ENG
            <br />
            IN
          </Lang>
          <TrayIcon $w={24} $ml={13}>
            <Wifi size={22} strokeWidth={1.8} />
          </TrayIcon>
          <TrayIcon $w={24} $ml={4}>
            <Volume2 size={20} strokeWidth={1.5} />
          </TrayIcon>
          <TrayIcon $w={24} $ml={5}>
            <svg width="20" height="16" viewBox="0 0 20 16" fill="none" stroke="#f2f2f2" strokeWidth="1.400">
              <path d="M4 4h12v10H2V7z" fill="#f2f2f2" fillOpacity="0.35" />
              <path d="M17 7h2v4h-2M5 1L3 5h3" />
            </svg>
          </TrayIcon>
          <Clock>
            18:12
            <br />
            12-10-2023
          </Clock>
          <TrayIcon $w={22} $ml={9}>
            <svg width="18" height="18" viewBox="0 0 18 18" fill="none" stroke="#f2f2f2" strokeWidth="1.200">
              <path d="M3 13c1-2 1-3 1-6a4 4 0 0 1 6-3M1.500 14h13c-1-2-2-3-2-6M6 15.500a2.500 2.500 0 0 0 5 0" />
              <path d="M10 6h3l-3 3h3M14 1h3l-3 3h3" />
            </svg>
          </TrayIcon>
        </Tray>
      </Taskbar>
    </Page>
  );
};

export default App;
